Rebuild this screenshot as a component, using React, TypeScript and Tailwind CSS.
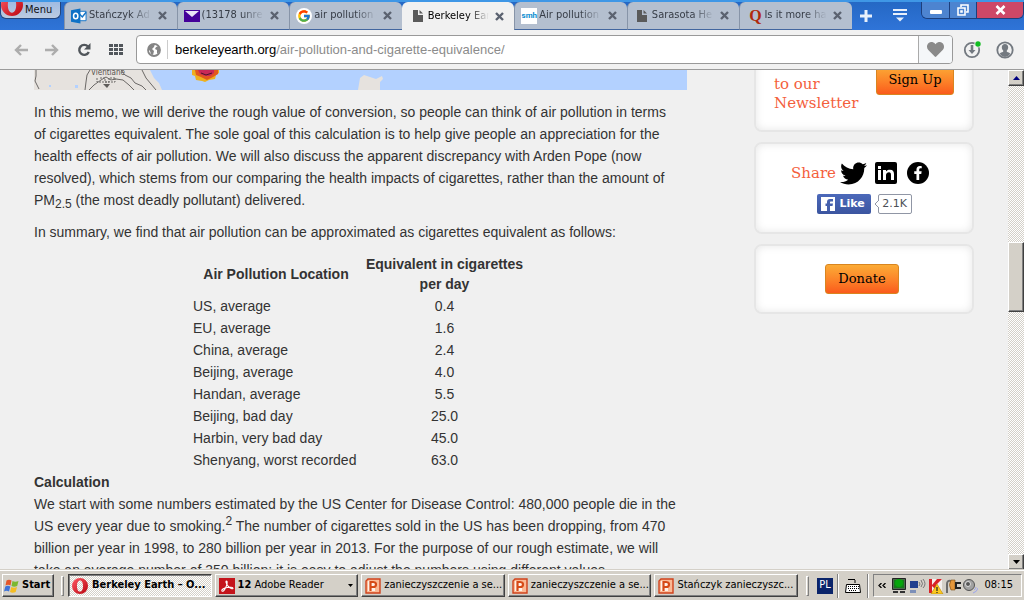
import React from "react";
import { FaTwitter, FaFacebookF, FaHeart } from "react-icons/fa";
import { FcGoogle } from "react-icons/fc";

const ui = "font-['DejaVu_Sans_Condensed','DejaVu_Sans',sans-serif]";

function PageIcon() {
  return (
    <svg width="12" height="14" viewBox="0 0 12 14" className="mr-0.5 ml-0.5 shrink-0">
      <path d="M1 1h5v5h5v7H1z" fill="#5a5a5a" />
      <path d="M7.500 1L11 4.500H7.500z" fill="#5a5a5a" />
    </svg>
  );
}

function OutlookIcon() {
  return (
    <svg width="16" height="16" viewBox="0 0 17 16" className="shrink-0">
      <path d="M8 3h8v10H8z" fill="#fff" stroke="#1173c7" />
      <path d="M9 6l3 3 4-5" fill="none" stroke="#1173c7" strokeWidth="1.500" />
      <path d="M0 2l10-2v16L0 14z" fill="#0f72c6" />
      <ellipse cx="5" cy="8" rx="2.300" ry="3" fill="none" stroke="#fff" strokeWidth="1.600" />
    </svg>
  );
}

function MailIcon() {
  return (
    <svg width="16" height="12" viewBox="0 0 16 12" className="shrink-0">
      <path d="M0 0h16v12H0z" fill="#440099" />
      <path d="M1 1h14L8 7z" fill="#e9e2f5" />
    </svg>
  );
}

function GoogleIcon() {
  return (
    <span className="flex size-4 shrink-0 items-center justify-center rounded-full bg-white">
      <FcGoogle size={14} />
    </span>
  );
}

function SmhIcon() {
  return (
    <span className="flex size-4 shrink-0 items-center justify-center bg-white font-['Roboto',sans-serif] text-[8px] font-bold text-[#0a8ccf]">
      smh
    </span>
  );
}

function QuoraIcon() {
  return (
    <span className="ml-0.5 w-3.5 shrink-0 text-center font-['Liberation_Serif',serif] text-base leading-4 font-bold text-[#b02a0c]">
      Q
    </span>
  );
}

function OperaIcon({ size }: { size: number }) {
  return (
    <svg width={size} height={size} viewBox="0 0 20 20" className="shrink-0">
      <defs>
        <linearGradient id="opera" x1="0" y1="0" x2="1" y2="1">
          <stop offset="0" stopColor="#ff5a64" />
          <stop offset="1" stopColor="#b8040f" />
        </linearGradient>
      </defs>
      <path
        fill="url(#opera)"
        fillRule="evenodd"
        d="M10 0a10 10 0 100 20 10 10 0 000-20zm0 3c2.500 0 3.800 3.200 3.800 7S12.500 17 10 17s-3.800-3.200-3.800-7S7.500 3 10 3z"
      />
    </svg>
  );
}

const tabs = [
  { title: "Stańczyk Ad", icon: <OutlookIcon /> },
  { title: "(13178 unre", icon: <MailIcon /> },
  { title: "air pollution c", icon: <GoogleIcon /> },
  { title: "Berkeley Ear", icon: <PageIcon />, active: true },
  { title: "Air pollution i", icon: <SmhIcon /> },
  { title: "Sarasota He", icon: <PageIcon /> },
  { title: "Is it more ha", icon: <QuoraIcon /> },
];

function TabStrip() {
  return (
    <header className="flex h-[30px] shrink-0 items-start border-t-2 border-[#3f97e6] bg-linear-to-b from-[#2568c4] to-[#2f74d8]">
      <button className="relative flex h-[17px] w-[61px] shrink-0 items-center overflow-hidden rounded-b-md border border-t-0 border-[#23457c] bg-linear-to-b from-[#9fbbe2] to-[#bccbe0] pl-6 text-[11px] text-[#111]">
        <span className="absolute -top-2 left-0">
          <OperaIcon size={22} />
        </span>
        Menu
      </button>
      <nav className="ml-[3px] flex h-full min-w-0 flex-1 pr-1">
        <div className="grid h-full max-w-[788px] min-w-0 flex-1 grid-cols-7">
          {tabs.map((t) => (
            <div
              key={t.title}
              className={
                t.active
                  ? "flex h-full min-w-0 items-center gap-0.5 rounded-t-md bg-[#f1f1f1] pr-2.5 pl-2 text-black"
                  : "flex h-full min-w-0 items-center gap-0.5 rounded-t-md border-b border-l border-b-[#42669f] border-l-[#8794a8] bg-[#b4bfcf] pr-2.5 pl-1.5 text-[#363c46]"
              }
            >
              {t.icon}
              <a href="#" className="min-w-0 flex-1 mask-r-from-65% text-[11px] whitespace-nowrap">
                {t.title}
              </a>
              <button aria-label="Close tab" className="ml-1 shrink-0">
                <svg width="9" height="9" viewBox="0 0 9 9">
                  <path d="M1 1l7 7M8 1L1 8" stroke="#5b6270" strokeWidth="2.400" />
                </svg>
              </button>
            </div>
          ))}
        </div>
        <button aria-label="New tab" className="ml-1 px-1">
          <svg width="12" height="12" viewBox="0 0 12 12">
            <path d="M6 0v12M0 6h12" stroke="#e8f0fb" strokeWidth="3" />
          </svg>
        </button>
      </nav>
      <button aria-label="Tab menu" className="mt-[7px] mr-3.5 ml-3 shrink-0">
        <svg width="14" height="14" viewBox="0 0 14 14">
          <path d="M0 1h14M0 5h14" stroke="#e8f0fb" strokeWidth="2" />
          <path d="M3 8.500h8l-4 4z" fill="#e8f0fb" />
        </svg>
      </button>
      <div className="flex h-[17px] shrink-0 overflow-hidden rounded-b-md border border-t-0 border-[#1c3f7c]">
        <button aria-label="Minimize" className="flex w-7 items-center justify-center border-r border-[#1c3f7c] bg-[#4d84d0]">
          <span className="mt-1 h-1 w-3 rounded-[1px] bg-white" />
        </button>
        <button aria-label="Restore" className="flex w-[27px] items-center justify-center border-r border-[#1c3f7c] bg-[#4d84d0]">
          <svg width="12" height="12" viewBox="0 0 12 12" fill="none" stroke="#fff" strokeWidth="1.600">
            <path d="M4 3V1h7v7H9M1 4h7v7H1zM4 7h1v1H4z" />
          </svg>
        </button>
        <button aria-label="Close" className="flex w-[46px] items-center justify-center bg-[#cd4867]">
          <svg width="11" height="10" viewBox="0 0 11 10">
            <path d="M1.500 1l8 8M9.500 1l-8 8" stroke="#fff" strokeWidth="2.600" />
          </svg>
        </button>
      </div>
    </header>
  );
}

function Toolbar() {
  return (
    <div className="flex h-10 shrink-0 items-center border-b border-[#9b9b9b] bg-[#f1f1f1] pr-2.5 pl-3.5">
      <button aria-label="Back">
        <svg width="14" height="12" viewBox="0 0 14 12" fill="none" stroke="#adadad" strokeWidth="2.400">
          <path d="M7 1L2 6l5 5M2 6h12" />
        </svg>
      </button>
      <button aria-label="Forward" className="ml-[17px]">
        <svg width="14" height="12" viewBox="0 0 14 12" fill="none" stroke="#adadad" strokeWidth="2.400">
          <path d="M7 1l5 5-5 5M12 6H0" />
        </svg>
      </button>
      <button aria-label="Reload" className="ml-[18px]">
        <svg width="14" height="14" viewBox="0 0 14 14">
          <path d="M11 3.500A5 5 0 1011.800 9" fill="none" stroke="#51565b" strokeWidth="2.400" />
          <path d="M13.500 0v6.500H7z" fill="#51565b" />
        </svg>
      </button>
      <button aria-label="Speed dial" className="ml-[18px]">
        <svg width="15" height="11" viewBox="0 0 15 11" fill="#51565b">
          {[0, 4, 8].map((y) => [0, 5, 10].map((x) => <path key={`${x}-${y}`} d={`M${x} ${y}h4v3h-4z`} />))}
        </svg>
      </button>
      <div className="ml-3 flex h-[29px] flex-1 items-stretch overflow-hidden rounded-[4px] border border-[#999] bg-white">
        <div className="my-1 flex w-[31px] items-center justify-center border-r border-[#ccc] pl-1">
          <svg width="14" height="14" viewBox="0 0 14 14">
            <circle cx="7" cy="7" r="6" fill="#fff" stroke="#858585" strokeWidth="1.800" />
            <path d="M1 6l2-4 5-1-1 3-2 2 2 2-1 4-2-1-1-3zM9 4l3-1 1 4-2 4-1-1V7L8 6z" fill="#858585" />
          </svg>
        </div>
        <div
          role="textbox"
          aria-label="Address"
          className="flex-1 self-center pl-[7px] font-['Liberation_Sans',sans-serif] text-[13px] whitespace-nowrap text-[#8b8b8b]"
        >
          <span className="text-black">berkeleyearth.org</span>/air-pollution-and-cigarette-equivalence/
        </div>
        <button aria-label="Bookmark" className="flex w-[34px] items-center justify-center border-l border-[#aaa] bg-[#f5f7f9]">
          <FaHeart size={17} color="#8a8a8a" />
        </button>
      </div>
      <button aria-label="Downloads" className="ml-2.5">
        <svg width="19" height="19" viewBox="0 0 19 19">
          <circle cx="9" cy="10" r="7.200" fill="none" stroke="#737980" strokeWidth="1.800" />
          <path d="M9 5v7" stroke="#737980" strokeWidth="2.600" />
          <path d="M5.500 10h7L9 14z" fill="#737980" />
          <circle cx="15" cy="4" r="3.600" fill="#f1f1f1" />
          <circle cx="15" cy="4" r="2.700" fill="#12bd22" />
        </svg>
      </button>
      <button aria-label="Account" className="ml-3.5">
        <svg width="18" height="18" viewBox="0 0 18 18">
          <circle cx="9" cy="9" r="7.700" fill="#f1f1f1" stroke="#737980" strokeWidth="1.800" />
          <path d="M9 3c2 0 3.200 1.300 3.200 3.200 0 1.600-.7 2.700-1.400 3.300v1.300c1.500.6 2.700.9 3.500 2A7 7 0 019 16a7 7 0 01-5.300-3.200c.8-1.100 2-1.400 3.500-2V9.500C6.500 8.900 5.800 7.800 5.800 6.200 5.800 4.300 7 3 9 3z" fill="#737980" />
        </svg>
      </button>
    </div>
  );
}

function MapStrip() {
  return (
    <svg viewBox="0 0 653 20" className="block h-5 w-full" preserveAspectRatio="xMinYMin slice">
      <path d="M0 0h653v20H0z" fill="#b3d1ff" />
      <path d="M0 0h116l4 8 5 5 3 7H0z" fill="#e6e2de" />
      <g fill="none" stroke="#6b6866">
        <path d="M2 0v6l-1 5 4 8M56 0l-3 5-1 7-1 8M55 20l5-5 7-5 5-3 5 3 5-1 7 1 6 5 5 5M87 0l4 5 6 3 4 5 7 3 4 4M108 0l4 8 5 6 5 6" />
        <path d="M63 8v4h18V8M66 8h5v4h4V8h6" strokeDasharray="2 1" />
      </g>
      <path d="M69 14h7l-3 4z" fill="#5f5c5a" />
      <text x="57" y="5" fontSize="8" fill="#58534f" fontFamily="DejaVu Sans Condensed, sans-serif">
        Vientiane
      </text>
      <path d="M158 0v5l3 1 1 4 6 1 3 1 4-2 6-1 1-4 3-2V0z" fill="#eeb01e" />
      <path d="M161 0l1 5 5 2 6 3 6-3 5-3V0z" fill="#e2571f" />
      <path d="M164 0l2 4 5 2h5l4-3V0z" fill="#c92858" />
      <path d="M167 3l5 2 6-2" fill="none" stroke="#4a1828" />
      <path d="M324 20l2-12 4-3 6 2 6 2 6-3 1 3-3 3v8z" fill="#e6e2de" />
      <path d="M15 15h2v2h-2zM41 15h3v3h-3z" fill="#b3d1ff" />
    </svg>
  );
}

const locations = [
  ["US, average", "0.4"],
  ["EU, average", "1.6"],
  ["China, average", "2.4"],
  ["Beijing, average", "4.0"],
  ["Handan, average", "5.5"],
  ["Beijing, bad day", "25.0"],
  ["Harbin, very bad day", "45.0"],
  ["Shenyang, worst recorded", "63.0"],
];

function Article() {
  return (
    <article className="w-[653px] shrink-0 font-['Liberation_Sans',sans-serif] text-sm leading-[22px] whitespace-nowrap text-[#333]">
      <MapStrip />
      <p className="mt-[11px]">
        In this memo, we will derive the rough value of conversion, so people can think of air pollution in terms
        <br />
        of cigarettes equivalent. The sole goal of this calculation is to help give people an appreciation for the
        <br />
        health effects of air pollution. We will also discuss the apparent discrepancy with Arden Pope (now
        <br />
        resolved), which stems from our comparing the health impacts of cigarettes, rather than the amount of
        <br />
        PM<sub className="text-xs leading-none">2.5</sub> (the most deadly pollutant) delivered.
      </p>
      <p className="mt-2.5">In summary, we find that air pollution can be approximated as cigarettes equivalent as follows:</p>
      <table className="mx-auto mt-2.5 border-collapse">
        <thead>
          <tr className="h-[42px] leading-5">
            <th className="w-[168px] p-0">Air Pollution Location</th>
            <th className="w-[169px] p-0">
              Equivalent in cigarettes
              <br />
              per day
            </th>
          </tr>
        </thead>
        <tbody>
          {locations.map(([place, count]) => (
            <tr key={place}>
              <td className="p-0 pl-px">{place}</td>
              <td className="p-0 text-center">{count}</td>
            </tr>
          ))}
        </tbody>
      </table>
      <h2 className="font-bold">Calculation</h2>
      <p>
        We start with some numbers estimated by the US Center for Disease Control: 480,000 people die in the
        <br />
        US every year due to smoking.<sup className="text-xs leading-none">2</sup> The number of cigarettes sold in the US has been dropping, from 470
        <br />
        billion per year in 1998, to 280 billion per year in 2013. For the purpose of our rough estimate, we will
        <br />
        take an average number of 350 billion; it is easy to adjust the numbers using different values.
      </p>
    </article>
  );
}

const card = "rounded-lg border-2 border-[#e6e6e6] bg-white shadow-[inset_0_0_8px_#e6e6e6]";
const orange =
  "h-[30px] rounded-[3px] border border-[#d9851f] bg-linear-to-b from-[#fbab36] to-[#fa5a1c] text-[13px] text-black";

function Sidebar() {
  return (
    <aside className="flex w-[220px] shrink-0 flex-col gap-2.5 font-['DejaVu_Serif',serif]">
      <section className={`${card} -mt-3 flex h-[74px] justify-between pr-[18px] pl-[18px]`}>
        <p className="mt-[15px] text-[15px] leading-[19px] text-[#f4603c]">
          to our
          <br />
          Newsletter
        </p>
        <button className={`${orange} mt-[5px] w-[78px]`}>Sign Up</button>
      </section>
      <section className={`${card} flex h-[92px] flex-col items-center pt-4`}>
        <div className="flex h-[26px] items-center text-[15px] text-[#f4603c]">
          Share
          <a href="#" aria-label="Twitter" className="mr-2 ml-1 text-black">
            <FaTwitter size={27} />
          </a>
          <a href="#" aria-label="LinkedIn" className="mr-2.5">
            <svg width="22" height="22" viewBox="0 0 22 22">
              <rect width="22" height="22" rx="2" fill="#000" />
              <path d="M3 8h3v10H3zM3 4h3v3H3zM8 8h3v1.500C12 8 13.500 7.700 15 7.700c3 0 4 1.800 4 4.500V18h-3v-5c0-1.700-.5-2.700-2-2.700S11 11.500 11 13v5H8z" fill="#fff" />
            </svg>
          </a>
          <a href="#" aria-label="Facebook" className="mr-2 flex size-[22px] items-center justify-center rounded-full bg-black text-white">
            <FaFacebookF size={14} />
          </a>
        </div>
        <div className="mt-2 flex items-center font-['DejaVu_Sans',sans-serif] text-[11px]">
          <button className="flex h-5 w-[54px] items-center gap-[5px] rounded-[2px] bg-linear-to-b from-[#4c69ba] to-[#3b55a0] pl-1 font-bold text-white">
            <svg width="14" height="14" viewBox="0 0 14 14">
              <path d="M0 0h14v14H0z" fill="#fff" />
              <path d="M6 14V9H4.500V6.500H6V5c0-2 1-3 3-3h3v2.500h-2c-.8 0-1 .3-1 1v1h3L11.500 9H9v5z" fill="#4560ad" />
            </svg>
            Like
          </button>
          <svg width="5" height="8" viewBox="0 0 5 8" className="z-10 ml-[3px] -mr-px">
            <path d="M5 0L1 4l4 4" fill="#fff" stroke="#9096a5" />
          </svg>
          <span className="flex h-5 w-[34px] items-center justify-center rounded-[2px] border border-[#9096a5] text-[#4b4f56]">
            2.1K
          </span>
        </div>
      </section>
      <section className={`${card} flex h-[70px] items-center justify-center pr-1`}>
        <button className={`${orange} w-[74px]`}>Donate</button>
      </section>
    </aside>
  );
}

const raised =
  "border border-t-white border-l-white border-r-[#404040] border-b-[#404040] bg-[#d4d0c8] shadow-[inset_-1px_-1px_0_#808080]";
const dither = "bg-[repeating-conic-gradient(#d4d0c8_0_25%,#fff_0_50%)] bg-size-[2px_2px]";

function ScrollBar() {
  return (
    <div className={`${dither} flex w-4 shrink-0 flex-col`}>
      <button aria-label="Scroll up" className={`${raised} flex h-4 items-center justify-center`}>
        <svg width="7" height="4" viewBox="0 0 7 4">
          <path d="M0 4h7L3.500 0z" fill="#000080" />
        </svg>
      </button>
      <div className="grow-156 basis-0" />
      <div className={`${raised} h-[70px]`} />
      <div className="grow-242 basis-0" />
      <button aria-label="Scroll down" className={`${raised} flex h-4 items-center justify-center`}>
        <svg width="7" height="4" viewBox="0 0 7 4">
          <path d="M0 0h7L3.500 4z" fill="#000" />
        </svg>
      </button>
    </div>
  );
}

function PowerPointIcon() {
  return (
    <svg width="16" height="16" viewBox="0 0 16 16" className="shrink-0">
      <path d="M3 1h12v14H1V3z" fill="#fbb995" stroke="#d0421b" strokeWidth="1.400" />
      <path d="M3 3h7v10H3z" fill="#fff1e8" />
      <path d="M5.500 13V4H8c2 0 3 .9 3 2.400S10 9 8 9H6" fill="none" stroke="#d64a16" strokeWidth="2.200" />
    </svg>
  );
}

function ReaderIcon() {
  return (
    <svg width="16" height="16" viewBox="0 0 16 16" className="shrink-0">
      <path d="M0 0h16v16H0z" fill="#c4141b" />
      <path
        d="M3 13c-1-1 2-3 5-3.500 3-.6 6-.3 6 .8 0 1.200-3 .2-5-2.300S6.500 3 7.500 3s.8 3-.5 6-3 5-4 4z"
        fill="none"
        stroke="#fff"
        strokeWidth="1.100"
      />
    </svg>
  );
}

function Taskbar() {
  return (
    <footer className="flex h-[30px] shrink-0 items-center border-t border-white bg-[#d4d0c8] pr-0.5 pl-0.5 text-[11px] text-black shadow-[0_-1px_0_#d4d0c8]">
      <button className={`${raised} flex h-[23px] w-[52px] shrink-0 items-center gap-0.5 pl-px font-bold`}>
        <svg width="16" height="16" viewBox="0 0 16 16" className="shrink-0">
          <path d="M2.500 2.500C4 1.500 6 1.500 7.500 2.500L6.500 7.500C5 6.500 3 6.500 1.500 7.500z" fill="#e4572a" />
          <path d="M8.500 3c1.500 1 4 1 6 0l-1.300 5c-2 1-4 1-5.700 0z" fill="#7cb82f" />
          <path d="M1.300 8.500c1.500-1 3.500-1 5 0L5 13.500c-1.500-1-3.500-1-5 0z" fill="#3f73d8" />
          <path d="M7.300 9c1.700 1 3.700 1 5.700 0l-1.300 5c-2 1-4 1-5.700 0z" fill="#f5bd22" />
        </svg>
        Start
      </button>
      <span className="mr-1 ml-[7px] h-5 w-[3px] shrink-0 border border-t-white border-r-[#808080] border-b-[#808080] border-l-white" />
      <div className="grid min-w-0 flex-1 grid-cols-5 gap-[3px]">
        <button
          className={`${dither} flex h-[23px] min-w-0 items-center gap-1 border border-t-[#404040] border-r-white border-b-white border-l-[#404040] pl-[3px] font-bold whitespace-nowrap shadow-[inset_1px_1px_0_#808080]`}
        >
          <OperaIcon size={16} />
          Berkeley Earth – O...
        </button>
        <button className={`${raised} flex h-[23px] min-w-0 items-center gap-[3px] pr-1 pl-[3px] whitespace-nowrap`}>
          <ReaderIcon />
          <b>12</b> Adobe Reader
          <svg width="5" height="3" viewBox="0 0 5 3" className="ml-auto">
            <path d="M0 0h5L2.500 3z" />
          </svg>
        </button>
        {["zanieczyszczenie a se...", "zanieczyszczenie a se...", "Stańczyk zanieczyszc..."].map((t, i) => (
          <button key={i} className={`${raised} flex h-[23px] min-w-0 items-center gap-[3px] pl-[3px] whitespace-nowrap`}>
            <PowerPointIcon />
            {t}
          </button>
        ))}
      </div>
      <span className="ml-2 h-5 w-[3px] shrink-0 border border-t-white border-r-[#808080] border-b-[#808080] border-l-white" />
      <span className="ml-2 flex size-4 shrink-0 items-center justify-center bg-[#0a246a] text-[11px] text-white">PL</span>
      <span className="ml-1 h-6 w-0.5 border-r border-l border-r-white border-l-[#808080]" />
      <svg width="16" height="14" viewBox="0 0 16 14" className="mx-1.5 shrink-0">
        <path d="M3 0l1 1 1-1 1 1 1-1 1 1 1-1 1 1v3" fill="none" stroke="#000" />
        <path d="M1.500 5.500h13l1 8H.5z" fill="#fff" stroke="#000" />
        <path d="M3 7.500h11M3 9.500h11M4 11.500h8" stroke="#000" strokeDasharray="1 1" />
      </svg>
      <span className="h-6 w-0.5 border-r border-l border-r-white border-l-[#808080]" />
      <div className="ml-1 flex h-[23px] w-[149px] shrink-0 items-center border border-t-[#808080] border-r-white border-b-white border-l-[#808080] pl-1">
        <svg width="8" height="5" viewBox="0 0 8 5" fill="none" stroke="#000" strokeWidth="1.300">
          <path d="M3.500 0L1 2.500 3.500 5M7.500 0L5 2.500 7.500 5" />
        </svg>
        <svg width="86" height="16" viewBox="0 0 86 16" className="ml-1.5 shrink-0">
          <path d="M.5.500h13v11H.5z" fill="#4b6a4c" stroke="#222" />
          <path d="M2 2h10v8H2z" fill="#157a1a" />
          <circle cx="7" cy="5" r="4" fill="#06a50c" />
          <path d="M1 14h5M8 14h5" stroke="#333" strokeWidth="2" />
          <path d="M18 3h8v7h-8z" fill="#21408f" />
          <path d="M18 12h6v3h-6z" fill="#7c8fb8" />
          <path d="M27 4q2 2 0 4M29 2q3 4 0 7M31 1q4 5 0 9" fill="none" stroke="#777" />
          <path d="M37 1h13v14H37z" fill="#f4f0ee" />
          <path d="M37 1h3v6l5-6h5l-6 6 4 5h-4l-4-4v7h-3z" fill="#d92228" />
          <path d="M45 6l6 10H39z" fill="#fbc81e" stroke="#b98500" strokeWidth=".6" />
          <path d="M45 9v4M45 14v1" stroke="#222" strokeWidth="1.200" />
          <path d="M55 15V6q0-4 4-3" fill="none" stroke="#6b6b6b" strokeWidth="2" />
          <path d="M59 2h4v10h-4q-3-5 0-10z" fill="#e5973a" stroke="#7a4a10" strokeWidth=".6" />
          <path d="M64 4v7M65 5h4M65 10h4" stroke="#222" strokeWidth="2" />
          <circle cx="77" cy="7" r="5.500" fill="#a2a2a2" stroke="#555" />
          <circle cx="76" cy="6" r="2.500" fill="#555" stroke="#ddd" />
          <path d="M82 12q2-1 2-3M81 15q4-1 5-5" fill="none" stroke="#9ba4ee" />
        </svg>
        <time className="ml-auto pr-2">08:15</time>
      </div>
    </footer>
  );
}

export default function App() {
  return (
    <div className={`${ui} flex h-screen flex-col overflow-hidden bg-[#f1f1f1]`}>
      <TabStrip />
      <Toolbar />
      <div className="flex min-h-0 flex-1">
        <main className="flex min-w-0 flex-1 items-start gap-[67px] self-stretch overflow-hidden bg-[#f0f0f0] pl-[34px]">
          <Article />
          <Sidebar />
        </main>
        <ScrollBar />
      </div>
      <Taskbar />
    </div>
  );
}
